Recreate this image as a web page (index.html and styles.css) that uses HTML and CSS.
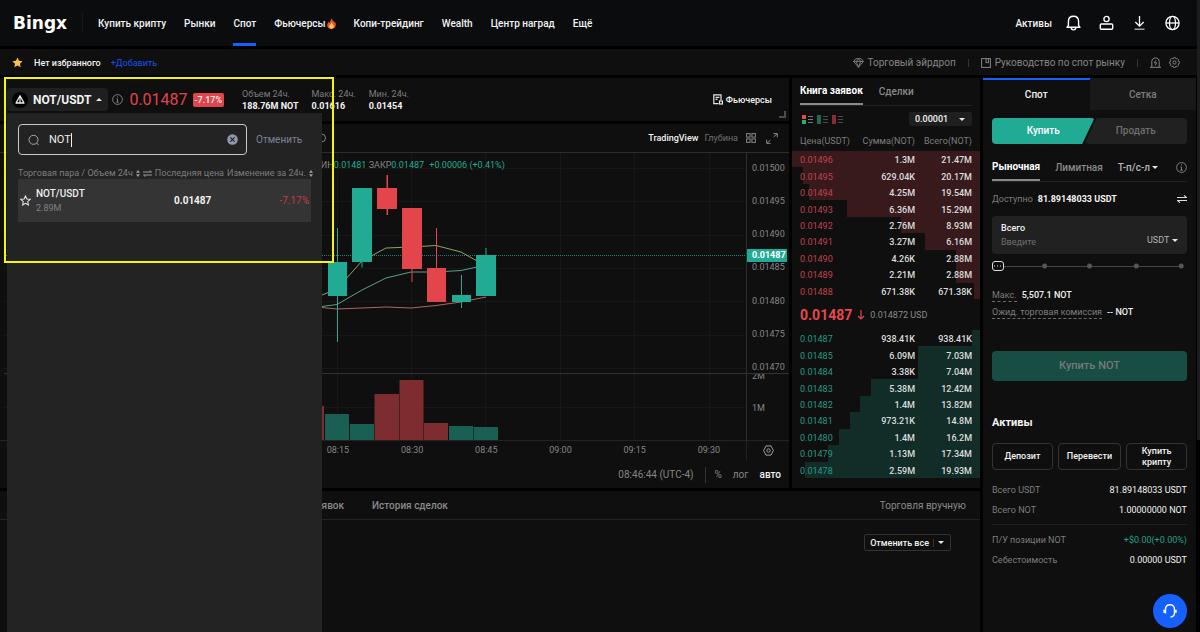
FILE: index.html
```html
<!DOCTYPE html>
<html lang="ru">
<head>
<meta charset="utf-8">
<meta name="viewport" content="width=device-width, initial-scale=1">
<title>NOT/USDT — BingX</title>
<link rel="stylesheet" href="styles.css">
</head>
<body>
<header class="topbar">
  <a class="logo" href="#">Bingx</a>
  <nav class="nav">
    <a href="#">Купить крипту</a>
    <a href="#">Рынки</a>
    <a href="#" class="active">Спот</a>
    <a href="#" class="hot">Фьючерсы<svg width="9" height="11" viewBox="0 0 9 11"><path d="M4 0C4.600 2 7 3 7.200 4.600L8 3.800C8.800 5.500 9 7 8.400 8.600 7.800 10.200 6.300 11 4.500 11S.9 10.200.4 8.500C-.2 6.500.7 5 1.600 4L2.400 5C3 3.500 4.300 2.500 4 0Z" fill="#f0532d"/><path d="M4.700 4.500C5 6 6.800 6.800 6.700 8.600 6.600 10 5.700 10.700 4.500 10.700S2.200 9.900 2.200 8.600C2.200 7 4.200 6.500 4.700 4.500Z" fill="#ffd04a"/></svg></a>
    <a href="#">Копи-трейдинг</a>
    <a href="#">Wealth</a>
    <a href="#">Центр наград</a>
    <a href="#">Ещё</a>
  </nav>
  <div class="top-actions">
    <a href="#">Активы</a>
    <button aria-label="Уведомления"><svg width="15" height="16" viewBox="0 0 15 16" fill="none" stroke="#fff" stroke-width="1.400"><path d="M1 12.300H14L12.600 10.300V6.500C12.600 3.300 10.400 1.300 7.500 1.300S2.400 3.300 2.400 6.500V10.300Z" stroke-linejoin="round"/><path d="M5.200 12.600C5.200 15.600 9.800 15.600 9.800 12.600"/></svg></button>
    <button aria-label="Профиль"><svg width="15" height="16" viewBox="0 0 15 16" fill="none" stroke="#fff" stroke-width="1.400"><circle cx="7.500" cy="4" r="2.600"/><rect x="1.300" y="9" width="12.400" height="5.300" rx="1"/></svg></button>
    <button aria-label="Скачать"><svg width="15" height="16" viewBox="0 0 15 16" fill="none" stroke="#fff" stroke-width="1.300"><path d="M7.500 1V11M3.300 7L7.500 11.200L11.700 7"/><path d="M2.500 14.200H12.500" stroke="#bbb"/></svg></button>
    <button aria-label="Язык"><svg width="15" height="16" viewBox="0 0 15 16" fill="none" stroke="#fff" stroke-width="1.300"><circle cx="7.500" cy="8" r="6.600"/><ellipse cx="7.500" cy="8" rx="3" ry="6.600"/><path d="M1 8H14"/></svg></button>
  </div>
</header>

<div class="subbar">
  <svg class="fav-star" width="11" height="11" viewBox="0 0 12 12"><path d="M6 .5L7.700 4.100 11.600 4.600 8.700 7.300 9.500 11.200 6 9.300 2.500 11.200 3.300 7.300.4 4.600 4.300 4.100Z" fill="#f5c04c"/></svg>
  <span class="fav-empty">Нет избранного</span>
  <a class="fav-add" href="#">+Добавить</a>
  <div class="sub-links">
    <a href="#"><svg width="11" height="10" viewBox="0 0 11 10" fill="none" stroke="#858585"><path d="M2.800.7H8.200L10.400 3.400 5.500 9.300.6 3.400ZM.6 3.400H10.400M3.300 3.400L5.500 9.300 7.700 3.400 5.500.9Z" stroke-width=".9"/></svg>Торговый эйрдроп</a>
    <i class="bar"></i>
    <a href="#"><svg width="10" height="10" viewBox="0 0 10 10" fill="none" stroke="#858585"><rect x=".6" y=".6" width="8.800" height="8.800"/><path d="M5 .6V5L6.200 4.200 7.400 5V.6"/></svg>Руководство по спот рынку</a>
    <i class="bar"></i>
    <button aria-label="Оповещение"><svg width="11" height="11" viewBox="0 0 11 11" fill="none" stroke="#858585"><path d="M0 10.300H11M1.800 10V4.500C1.800 2.300 3.400.9 5.500.9S9.200 2.300 9.200 4.500V10"/><path d="M6 3.300L4.400 5.900H6.600L5.200 8.400"/></svg></button>
    <button aria-label="Настройки"><svg width="11" height="11" viewBox="0 0 11 11" fill="none" stroke="#858585"><path d="M4.600.6H6.400L6.900 1.900 8.200 1.400 9.600 2.800 9.100 4.100 10.400 4.600V6.400L9.100 6.900 9.600 8.200 8.200 9.600 6.900 9.100 6.400 10.400H4.600L4.100 9.100 2.800 9.600 1.400 8.200 1.900 6.900.6 6.400V4.600L1.900 4.100 1.400 2.800 2.800 1.400 4.100 1.900Z" stroke-width=".9"/><circle cx="5.500" cy="5.500" r="1.600"/></svg></button>
  </div>
</div>

<main class="workspace">
  <section class="panel pair">
    <button class="pair-btn">
      <svg width="16" height="16" viewBox="0 0 16 16"><circle cx="8" cy="8" r="8" fill="#000"/><path d="M8 3.800L12 11H4Z" fill="none" stroke="#eee" stroke-width="1.300" stroke-linejoin="round"/><path d="M8 6V11" stroke="#eee" stroke-width="1.200"/></svg>
      NOT/USDT<i class="tri up"></i>
    </button>
    <svg class="info" width="11" height="11" viewBox="0 0 11 11" fill="none" stroke="#8a8a8a" stroke-width=".9"><circle cx="5.500" cy="5.500" r="4.900"/><path d="M5.500 2.500V3.600M4.500 5H5.500V8M4.200 8.200H6.800"/></svg>
    <strong class="last">0.01487</strong>
    <span class="chip">-7.17%</span>
    <dl class="stats">
      <div><dt>Объем 24ч.</dt><dd>188.76M NOT</dd></div>
      <div><dt>Макс. 24ч.</dt><dd>0.01616</dd></div>
      <div><dt>Мин. 24ч.</dt><dd>0.01454</dd></div>
    </dl>
    <a class="futures" href="#"><svg width="10" height="11" viewBox="0 0 10 11" fill="none" stroke="#e6e6e6" stroke-width="1.200"><path d="M8 6V.8H.8V9.700H5.500M2.500 3.300H6.400M2.500 5.300H4.500"/><rect x="6.500" y="7" width="2.900" height="3"/></svg>Фьючерсы</a>
    <i class="resize"></i>

    <div class="drawer">
      <div class="search-row">
        <label class="search">
          <svg width="12" height="12" viewBox="0 0 12 12" fill="none" stroke="#a8a8a8"><circle cx="5.500" cy="5.800" r="4.500"/><path d="M8.600 9L10.500 11"/></svg>
          <input type="text" value="NOT" aria-label="Поиск пары">
          <i class="caret"></i>
          <svg width="11" height="11" viewBox="0 0 11 11"><circle cx="5.500" cy="5.500" r="5.300" fill="#8f97ab"/><path d="M3.400 3.400L7.600 7.600M7.600 3.400L3.400 7.600" stroke="#232323" stroke-width="1.200"/></svg>
        </label>
        <button class="cancel">Отменить</button>
      </div>
      <div class="pair-head">
        <span>Торговая пара / Объем 24ч</span>
        <svg width="4" height="7" viewBox="0 0 4 7" fill="#9aa1b3"><path d="M2 0L4 2.700H0ZM2 7L4 4.300H0Z"/></svg>
        <svg width="9" height="7" viewBox="0 0 9 7" fill="none" stroke="#999"><path d="M0 2H8.500L6.500.3M9 5H.5L2.500 6.700"/></svg>
        <span class="col-price">Последняя цена</span>
        <span>Изменение за 24ч.</span>
        <svg width="4" height="7" viewBox="0 0 4 7" fill="#9aa1b3"><path d="M2 0L4 2.700H0ZM2 7L4 4.300H0Z"/></svg>
      </div>
      <div class="pair-row">
        <svg width="11" height="11" viewBox="0 0 12 12" fill="none" stroke="#e8e8e8" stroke-width="1.100"><path d="M6 1L7.500 4.400 11.200 4.700 8.400 7.200 9.200 10.900 6 9 2.800 10.900 3.600 7.200.8 4.700 4.500 4.400Z"/></svg>
        <div class="pair-name"><b>NOT/USDT</b><small>2.89M</small></div>
        <b class="pair-price">0.01487</b>
        <span class="pair-change">-7.17%</span>
      </div>
    </div>
    <div class="highlight"></div>
  </section>

  <section class="panel chart">
    <div class="chart-tools">
      <svg class="hidden-tool" width="9" height="10" viewBox="0 0 9 10" fill="none" stroke="#858585"><circle cx="4.500" cy="5" r="4"/></svg>
      <button class="on">TradingView</button>
      <button>Глубина</button>
      <button class="tool-grid" aria-label="Макет"><svg width="10" height="10" viewBox="0 0 10 10" fill="none" stroke="#858585"><rect x=".6" y=".6" width="3.500" height="3.500"/><rect x="5.900" y=".6" width="3.500" height="3.500"/><rect x=".6" y="5.900" width="3.500" height="3.500"/><rect x="5.900" y="5.900" width="3.500" height="3.500"/></svg></button>
      <button aria-label="На весь экран"><svg width="12" height="11" viewBox="0 0 12 11" fill="none" stroke="#8a8a8a"><path d="M7.500.6H11.300V4.300M11 .8L7.600 4M4.500 10.400H.7V6.700M1 10.200L4.400 7"/></svg></button>
    </div>
    <div class="plot-row">
      <div class="plot">
        <svg viewBox="4 153 742 287" preserveAspectRatio="none">
          <path d="M337.500 153V440M411.500 153V440M485.500 153V440M560.500 153V440M634.500 153V440M709.500 153V440M4 168.500H746M4 201.500H746M4 235.500H746M4 268.500H746M4 301.500H746M4 335.500H746M4 368.500H746M4 407.500H746" stroke="#171717" fill="none"/>
          <path d="M4 373.500H746" stroke="#303235"/>
          <path d="M4 255.500H746" stroke="#23806c" stroke-dasharray="1 1"/>
          <g fill="none" stroke-width="1">
            <path d="M310 299L322 295 337 289 362 261 386 248 411 247 436 245.500 461 252 486 266" stroke="#8ba36a"/>
            <path d="M310 308L337 304.500 362 290 386 278 411 272 436 272 461 270.500 486 265" stroke="#58a088"/>
            <path d="M310 306L322 307.500 337 309 362 308 386 307 411 308 436 305.500 461 302 486 297" stroke="#a56a69"/>
          </g>
          <g fill="#22ab94">
            <path d="M337 228H338V342H337ZM361.500 260H362.500V267.500H361.500ZM461 275H462V308H461ZM485.500 248H486.500V260H485.500Z"/>
            <rect x="328" y="262" width="19" height="34"/><rect x="352" y="188" width="20" height="74"/><rect x="452" y="295" width="19" height="7"/><rect x="476" y="255" width="20" height="41"/>
          </g>
          <g fill="#e3454a">
            <path d="M386.500 175H388V215H386.500ZM411.500 208H412.500V282H411.500ZM436 228H437V270H436Z"/>
            <rect x="377" y="188" width="20" height="21"/><rect x="402" y="208" width="20" height="61"/><rect x="427" y="268" width="19" height="34"/>
          </g>
          <path d="M325 414H349V440H325ZM350 424H374V440H350ZM449 426H473V440H449ZM473.500 427H498V440H473.500Z" fill="#195f54"/>
          <path d="M310 406H324V440H310ZM374.500 394H399V440H374.500ZM399.500 380H423.500V440H399.500ZM424 423H448V440H424Z" fill="#7d2c2f"/>
        </svg>
        <p class="legend"><span>МИН</span>0.01481 <span class="close">ЗАКР</span>0.01487 <span class="diff">+0.00006 (+0.41%)</span></p>
      </div>
      <div class="scale">
        <ul class="prices"><li>0.01500</li><li>0.01495</li><li>0.01490</li><li>0.01485</li><li>0.01480</li><li>0.01475</li><li>0.01470</li></ul>
        <b class="price-tag">0.01487</b>
        <div class="volumes"><span class="cut">2M</span><span>1M</span></div>
      </div>
    </div>
    <div class="time-row">
      <ol class="times"><li>08:15</li><li>08:30</li><li>08:45</li><li>09:00</li><li>09:15</li><li>09:30</li></ol>
      <button class="axis-set" aria-label="Настройки шкалы"><svg width="11" height="11" viewBox="0 0 11 11" fill="none" stroke="#a0a0a0"><path d="M3 .9H8L10.400 5.500 8 10.100H3L.6 5.500Z"/><circle cx="5.500" cy="5.500" r="1.700"/></svg></button>
    </div>
    <div class="chart-foot">
      <button>08:46:44 (UTC-4)</button><i class="bar"></i><button class="pct">%</button><button>лог</button><button class="on">авто</button>
    </div>
  </section>

  <section class="panel book">
    <div class="tabs book-tabs"><button class="on">Книга заявок</button><button>Сделки</button></div>
    <div class="book-tools">
      <button aria-label="Все заявки"><svg width="11" height="9" viewBox="0 0 11 9"><path d="M0 0H4V4H0Z" fill="#f0464b"/><path d="M0 5H4V9H0Z" fill="#20b26c"/><path d="M6 1.500H11M6 4.500H11M6 7.500H11" stroke="#777"/></svg></button>
      <button aria-label="Покупки"><svg width="11" height="9" viewBox="0 0 11 9"><path d="M0 0H4V9H0Z" fill="#1c6a4f"/><path d="M6 1.500H11M6 4.500H11M6 7.500H11" stroke="#4b4b4b"/></svg></button>
      <button aria-label="Продажи"><svg width="11" height="9" viewBox="0 0 11 9"><path d="M0 0H4V9H0Z" fill="#8b2d30"/><path d="M6 1.500H11M6 4.500H11M6 7.500H11" stroke="#4b4b4b"/></svg></button>
      <span class="pick step"><select aria-label="Шаг цены"><option>0.00001</option></select><i class="tri"></i></span>
    </div>
    <table class="asks">
      <thead><tr><th>Цена(USDT)</th><th>Сумма(NOT)</th><th>Всего(NOT)</th></tr></thead>
      <tbody>
        <tr style="--d:100%"><td>0.01496</td><td>1.3M</td><td>21.47M</td></tr>
        <tr style="--d:94%"><td>0.01495</td><td>629.04K</td><td>20.17M</td></tr>
        <tr style="--d:91%"><td>0.01494</td><td>4.25M</td><td>19.54M</td></tr>
        <tr style="--d:71%"><td>0.01493</td><td>6.36M</td><td>15.29M</td></tr>
        <tr style="--d:42%"><td>0.01492</td><td>2.76M</td><td>8.93M</td></tr>
        <tr style="--d:29%"><td>0.01491</td><td>3.27M</td><td>6.16M</td></tr>
        <tr style="--d:13%"><td>0.01490</td><td>4.26K</td><td>2.88M</td></tr>
        <tr style="--d:13%"><td>0.01489</td><td>2.21M</td><td>2.88M</td></tr>
        <tr style="--d:3%"><td>0.01488</td><td>671.38K</td><td>671.38K</td></tr>
      </tbody>
    </table>
    <div class="mid"><strong>0.01487</strong><svg width="8" height="10" viewBox="0 0 8 10" fill="none" stroke="#e0454b" stroke-width="1.200"><path d="M4 0V9M1 6L4 9 7 6"/></svg><span>0.014872 USD</span></div>
    <table class="bids">
      <tbody>
        <tr style="--d:4%"><td>0.01487</td><td>938.41K</td><td>938.41K</td></tr>
        <tr style="--d:33%"><td>0.01485</td><td>6.09M</td><td>7.03M</td></tr>
        <tr style="--d:33%"><td>0.01484</td><td>3.38K</td><td>7.04M</td></tr>
        <tr style="--d:58%"><td>0.01483</td><td>5.38M</td><td>12.42M</td></tr>
        <tr style="--d:64%"><td>0.01482</td><td>1.4M</td><td>13.82M</td></tr>
        <tr style="--d:69%"><td>0.01481</td><td>973.21K</td><td>14.8M</td></tr>
        <tr style="--d:75%"><td>0.01480</td><td>1.4M</td><td>16.2M</td></tr>
        <tr style="--d:81%"><td>0.01479</td><td>1.13M</td><td>17.34M</td></tr>
        <tr style="--d:93%"><td>0.01478</td><td>2.59M</td><td>19.93M</td></tr>
      </tbody>
    </table>
  </section>

  <section class="panel orders">
    <div class="orders-tabs"><button>История заявок</button><button>История сделок</button><a href="#">Торговля вручную</a></div>
    <div class="orders-bar"><button class="cancel-all">Отменить все<i class="bar"></i><i class="tri"></i></button></div>
  </section>

  <section class="panel trade">
    <div class="mode"><button class="on">Спот</button><button>Сетка</button></div>
    <div class="trade-body">
      <div class="side"><button class="buy">Купить</button><button class="sell">Продать</button></div>
      <div class="tabs type-tabs">
        <button class="on">Рыночная</button><button>Лимитная</button><button class="tpsl">Т-п/с-л<i class="tri"></i></button>
        <svg width="11" height="11" viewBox="0 0 11 11" fill="none" stroke="#8a8a8a" stroke-width=".9"><circle cx="5.500" cy="5.500" r="4.900"/><path d="M5.500 2.500V3.600M4.500 5H5.500V8M4.200 8.200H6.800"/></svg>
      </div>
      <div class="avail"><span>Доступно</span><b>81.89148033 USDT</b><svg width="10" height="8" viewBox="0 0 10 8" fill="none" stroke="#ddd" stroke-width="1.100"><path d="M0 2.500H9.500L7 .4M10 5.500H.5L3 7.600"/></svg></div>
      <div class="amount">
        <label for="total">Всего</label>
        <div class="amount-row"><input id="total" type="text" placeholder="Введите"><span class="pick"><select aria-label="Валюта"><option>USDT</option></select><i class="tri"></i></span></div>
      </div>
      <input class="slider" type="range" min="0" max="100" step="25" value="0" aria-label="Доля баланса">
      <div class="est"><span>Макс.</span><b>5,507.1 NOT</b></div>
      <div class="est"><span>Ожид. торговая комиссия</span><b>-- NOT</b></div>
      <button class="submit" disabled>Купить NOT</button>
      <h2>Активы</h2>
      <div class="asset-actions"><button>Депозит</button><button>Перевести</button><button>Купить крипту</button></div>
      <dl class="balances">
        <div><dt>Всего USDT</dt><dd>81.89148033 USDT</dd></div>
        <div><dt>Всего NOT</dt><dd>1.00000000 NOT</dd></div>
      </dl>
      <dl class="balances last-group">
        <div><dt>П/У позиции NOT</dt><dd class="gain">+$0.00(+0.00%)</dd></div>
        <div><dt>Себестоимость</dt><dd>0.00000 USDT</dd></div>
      </dl>
    </div>
    <button class="support" aria-label="Поддержка"><svg width="16" height="16" viewBox="0 0 16 16" fill="none" stroke="#fff" stroke-width="1.400"><path d="M3.500 10.500V6.500C3.500 3.500 5.500 1.700 8 1.700S12.500 3.500 12.500 6.500V10C12.500 12.500 11 13.800 8.500 14"/><path d="M2.200 6.800V9.800M13.800 6.800V9.800" stroke-width="1.800"/></svg></button>
  </section>
</main>
<div class="page-scroll"></div>
</body>
</html>
```
FILE: styles.css
```css
* { box-sizing: border-box; }
body {
  margin: 0;
  min-height: 100vh;
  display: flex;
  flex-direction: column;
  background: #000;
  color: #f2f2f2;
  font: 9px/12px Roboto, "Noto Sans", sans-serif;
}
a { color: inherit; text-decoration: none; }
button, input, select { font: inherit; color: inherit; background: none; border: 0; padding: 0; margin: 0; outline: none; }
button { cursor: pointer; }
ul, ol, dl, dd, p, h2 { margin: 0; padding: 0; list-style: none; }
svg { display: block; flex: none; }
.panel { background: #0f0f0f; position: relative; }
.bar { width: 1px; height: 8px; background: #333; }
.tri { border: 3px solid transparent; border-top: 3px solid #e6e6e6; border-bottom: 0; display: inline-block; flex: none; }
.tri.up { border-top: 0; border-bottom: 3px solid #e6e6e6; }

/* header */
.topbar { height: 46px; display: flex; align-items: center; padding: 0 20px 0 13px; background: #0b0c0e; font-size: 10px; font-weight: 500; }
.logo { font: bold 17px/20px "DejaVu Sans", sans-serif; padding-right: 15px; border-right: 1px solid #16181b; color: #fff; }
.nav { display: flex; gap: 18px; padding-left: 15px; height: 100%; }
.nav a { display: flex; align-items: center; padding-top: 1px; border-top: 3px solid transparent; border-bottom: 3px solid transparent; }
.nav .hot { gap: 1px; }
.nav .active { border-bottom-color: #1660ff; }
.top-actions { margin-left: auto; display: flex; align-items: center; gap: 18px; }
.top-actions a { margin-right: -4px; padding-top: 1px; }

.subbar { height: 26px; margin: 3px 0; display: flex; align-items: center; padding: 1px 20px 0 12px; background: #0f0f0f; }
.fav-star { margin-bottom: 1px; }
.fav-empty { margin-left: 11px; font-weight: 500; }
.fav-add { margin-left: 10px; color: #1a50ef; }
.sub-links { margin-left: auto; display: flex; align-items: center; gap: 12px; color: #858585; font-size: 10px; }
.sub-links a { display: flex; align-items: center; gap: 4px; }
.sub-links button + button { margin-left: -4px; }

.workspace {
  flex: 1;
  margin-right: 4px;
  display: grid;
  gap: 3px;
  grid-template-columns: minmax(0, 1fr) 188px 213px;
  grid-template-rows: auto auto 1fr;
  grid-template-areas: "pair book trade" "chart book trade" "orders orders trade";
}
.page-scroll { position: absolute; right: 0; top: 0; width: 3px; height: 440px; background: #1c1d21; }

/* pair header */
.pair { grid-area: pair; display: flex; align-items: center; padding: 0 17px 0 7px; height: 43px; }
.pair-btn { display: flex; align-items: center; gap: 5px; height: 23px; padding: 0 6px 0 5px; border-radius: 4px; background: #1f1f1f; font-size: 12px; font-weight: 700; }
.info { margin: 0 6px 0 4px; }
.last { font-size: 16px; line-height: 20px; font-weight: 400; color: #e0454b; }
.chip { margin-left: 5px; padding: 1px 2px; border-radius: 2px; background: #e0454b; font-weight: 500; }
.stats { display: flex; gap: 13px; margin-left: 18px; }
.stats dt { color: #7d7d7d; }
.stats dd { font-weight: 700; }
.futures { margin-left: auto; display: flex; align-items: center; gap: 3px; font-weight: 500; }
.resize { position: absolute; right: 3px; bottom: 3px; width: 7px; height: 7px; border: solid #4a4b4e; border-width: 0 2px 2px 0; }

/* pair search drawer */
.drawer { position: absolute; z-index: 2; left: 7px; top: 35px; width: 315px; height: calc(100vh - 113px); padding: 11px; background: #232323; color: #7d7d7d; }
.search-row { display: flex; gap: 9px; }
.search { position: relative; flex: 1; max-width: 229px; height: 31px; display: flex; align-items: center; padding: 0 8px 0 9px; border: 1px solid #c9c9c9; border-radius: 4px; }
.search input { flex: 1; min-width: 0; margin-left: 9px; color: #eee; font-size: 11px; }
.caret { position: absolute; left: 52px; top: 8px; width: 1px; height: 14px; background: #eee; }
.cancel { color: #7b8396; font-size: 10px; }
.pair-head { display: flex; align-items: center; gap: 3px; margin-top: 12px; white-space: nowrap; }
.pair-head .col-price { margin-left: auto; }
.pair-row { display: flex; align-items: center; height: 43px; padding: 0 2px; background: #343434; }
.pair-name { width: 143px; padding-left: 5px; }
.pair-name b, .pair-name small { display: block; font-size: 10px; line-height: 15px; color: #eee; font-weight: 500; }
.pair-name small { font-size: 9px; color: #808080; font-weight: 400; }
.pair-price { font-size: 10px; color: #f2f2f2; }
.pair-change { margin-left: auto; color: #c23f45; font-size: 10px; }
.highlight { position: absolute; z-index: 3; left: 4px; top: -1px; width: 330px; height: 186px; border: 2px solid #f8f500; pointer-events: none; }

/* chart */
.chart { grid-area: chart; color: #868686; }
.chart-tools { height: 29px; display: flex; align-items: center; justify-content: flex-end; gap: 6px; padding-right: 11px; border-bottom: 1px solid #2b2d30; color: #707070; }
.chart-tools .on { color: #f2f2f2; font-weight: 500; }
.tool-grid { margin: 0 4px 0 2px; }
.hidden-tool { position: absolute; left: 317px; top: 9px; }
.plot-row { display: flex; height: 288px; padding-left: 4px; border-bottom: 1px solid #232323; }
.plot { flex: 1; position: relative; }
.plot svg { width: 100%; height: 100%; }
.legend { position: absolute; left: 309px; top: 6px; white-space: pre; color: #22ab94; }
.legend span { color: #868686; }
.legend .diff { margin-left: 3px; color: #22ab94; }
.scale { position: relative; width: 43px; border-left: 1px solid #2b2d30; }
.prices { height: 221px; padding: 9px 0 0 5px; display: flex; flex-direction: column; justify-content: space-between; border-bottom: 1px solid #303235; }
.price-tag { position: absolute; left: 0; top: 96px; width: 40px; height: 13px; padding-left: 5px; line-height: 13px; background: #22ab94; color: #fff; }
.volumes { padding-left: 5px; overflow: hidden; }
.volumes span { display: block; margin-top: 20px; }
.volumes .cut { margin-top: -4px; }
.time-row { display: flex; height: 19px; padding-left: 4px; }
.times { flex: 1; display: grid; grid-template-columns: repeat(10, 1fr); line-height: 19px; text-align: center; }
.times li:first-child { grid-column-start: 5; }
.axis-set { width: 43px; border-left: 1px solid #232323; display: grid; place-items: center; }
.chart-foot { height: 28px; display: flex; align-items: center; justify-content: flex-end; gap: 11px; padding: 2px 8px 0 0; font-size: 10px; }
.chart-foot .bar { height: 16px; }
.chart-foot .on { color: #f2f2f2; font-weight: 500; }
.chart-foot .pct { margin-left: -2px; }

/* order book */
.book { grid-area: book; padding-bottom: 10px; }
.tabs { display: flex; border-bottom: 1px solid #222327; color: #8a8a8a; font-size: 10px; font-weight: 500; white-space: nowrap; }
.tabs .on { color: #fff; font-weight: 700; border-bottom: 2px solid #8a8a8a; }
.book-tabs { margin: 0 8px; gap: 16px; height: 28px; }
.book-tools { display: flex; align-items: center; gap: 4px; padding: 1px 8px 0 10px; height: 25px; }
.pick { position: relative; display: inline-flex; align-items: center; }
.pick select { appearance: none; padding-right: 10px; }
.pick .tri { position: absolute; right: 0; pointer-events: none; }
.step { margin-left: auto; width: 63px; height: 14px; padding-left: 6px; border-radius: 2px; background: #1f1f1f; }
.step .tri { right: 7px; }
.step select { width: 100%; font-weight: 500; }
table { width: 100%; border-collapse: collapse; table-layout: fixed; text-align: right; }
th, td { padding: 0; }
th { height: 20px; color: #7d7d7d; font-weight: 400; white-space: nowrap; }
td { padding-top: 2px; font-weight: 500; color: #dcdcdc; }
th:first-child, td:first-child { text-align: left; padding-left: 8px; width: 60px; }
th:nth-child(2), td:nth-child(2) { width: 63px; }
th:last-child, td:last-child { padding-right: 8px; }
.asks tbody tr { background: linear-gradient(to left, #381a1c var(--d), transparent var(--d)); }
.bids tbody tr { background: linear-gradient(to left, #122c28 var(--d), transparent var(--d)); }
.asks { height: 168px; }
.bids { height: 148px; }
.asks td:first-child { color: #c2424a; font-weight: 400; }
.bids td:first-child { color: #239b83; font-weight: 400; }
.mid { height: 31px; padding-left: 8px; display: flex; align-items: center; gap: 5px; color: #8a8a8a; }
.mid strong { font-size: 14px; color: #e8474c; }

/* orders */
.orders { grid-area: orders; }
.orders-tabs { display: flex; gap: 28px; height: 29px; align-items: center; padding: 2px 14px 0 269px; border-bottom: 1px solid #222327; color: #8a8a8a; font-size: 10px; }
.orders-tabs button { font-weight: 500; }
.orders-tabs a { margin-left: auto; }
.orders-bar { display: flex; justify-content: flex-end; padding: 14px 29px; }
.cancel-all { display: flex; align-items: center; gap: 4px; height: 17px; padding: 0 6px 0 5px; border: 1px solid #333; border-radius: 2px; font-weight: 500; }

/* trade form */
.trade { grid-area: trade; }
.mode { display: grid; grid-template-columns: 1fr 1fr; height: 32px; font-size: 10px; font-weight: 500; }
.mode button { border-top: 2px solid transparent; background: #191919; color: #7d7d7d; }
.mode .on { border-top-color: #1660ff; background: #0f0f0f; color: #f2f2f2; }
.trade-body { padding: 8px 9px; }
.side { display: flex; height: 26px; font-size: 10px; font-weight: 500; }
.buy { flex: 1; margin-right: -10px; border-radius: 4px; background: #22ab94; color: #fff; clip-path: polygon(0 0, 100% 0, 88% 100%, 0 100%); }
.sell { flex: 1; border-radius: 4px; background: #212121; color: #6e6e6e; clip-path: polygon(12% 0, 100% 0, 100% 100%, 0 100%); }
.type-tabs { margin-top: 10px; height: 28px; gap: 15px; align-items: stretch; }
.type-tabs svg { margin-left: auto; align-self: center; }
.type-tabs .tpsl { display: flex; align-items: center; gap: 2px; margin-right: -15px; color: #b5b5b5; }
.avail { display: flex; align-items: center; gap: 5px; margin-top: 11px; color: #7d7d7d; }
.avail b { color: #f2f2f2; font-weight: 700; }
.avail svg { margin-left: auto; }
.amount { margin-top: 11px; padding: 5px 9px; height: 38px; border-radius: 4px; background: #212121; }
.amount label { display: block; line-height: 14px; font-weight: 500; }
.amount-row { display: flex; justify-content: space-between; color: #b5b5b5; margin-top: 1px; }
.amount-row input { flex: 1; min-width: 0; }
.amount-row .pick select { padding-right: 8px; }
.amount-row .pick { margin-top: -4px; }
::placeholder { color: #6e6e6e; opacity: 1; }
.slider {
  display: block; width: 100%; height: 12px; margin: 6px 0 0; appearance: none;
  background:
    radial-gradient(circle at 27% 50%, #555 2px, transparent 3px),
    radial-gradient(circle at 50% 50%, #555 2px, transparent 3px),
    radial-gradient(circle at 74% 50%, #555 2px, transparent 3px),
    radial-gradient(circle at 97% 50%, #555 2px, transparent 3px),
    linear-gradient(#444, #444) 0 50% / 97% 1px no-repeat;
}
.slider::-webkit-slider-thumb {
  appearance: none; width: 12px; height: 10px; border: 1px solid #ddd; border-radius: 3px;
  background: radial-gradient(circle, #ddd 0, transparent 1px) 0 0 / 3px 8px #0f0f0f;
}
.est { display: flex; gap: 5px; margin-top: 4px; color: #7d7d7d; }
.est span { border-bottom: 1px dashed #6a6a6a; }
.est b { color: #f2f2f2; font-weight: 500; }
.slider + .est { margin-top: 17px; }
.submit { width: 100%; height: 30px; margin-top: 32px; border-radius: 4px; background: #184d44; color: #737c79; font-size: 11px; font-weight: 500; }
h2 { margin-top: 35px; font-size: 11px; line-height: 14px; font-weight: 700; }
.asset-actions { display: grid; grid-template-columns: repeat(3, 1fr); gap: 5px; margin-top: 13px; }
.asset-actions button { height: 27px; padding: 0 8px; border: 1px solid #333; border-radius: 4px; font-weight: 500; line-height: 11px; }
.balances { padding: 10px 0 4px; border-bottom: 1px solid #202020; }
.balances div { display: flex; justify-content: space-between; line-height: 20px; }
.balances dt { color: #7d7d7d; }
.balances .gain { color: #22a088; }
.last-group { padding-top: 5px; border: 0; }
.support { position: absolute; right: 9px; bottom: 4px; width: 34px; height: 34px; border-radius: 50%; background: #1660ff; display: grid; place-items: center; }
```
